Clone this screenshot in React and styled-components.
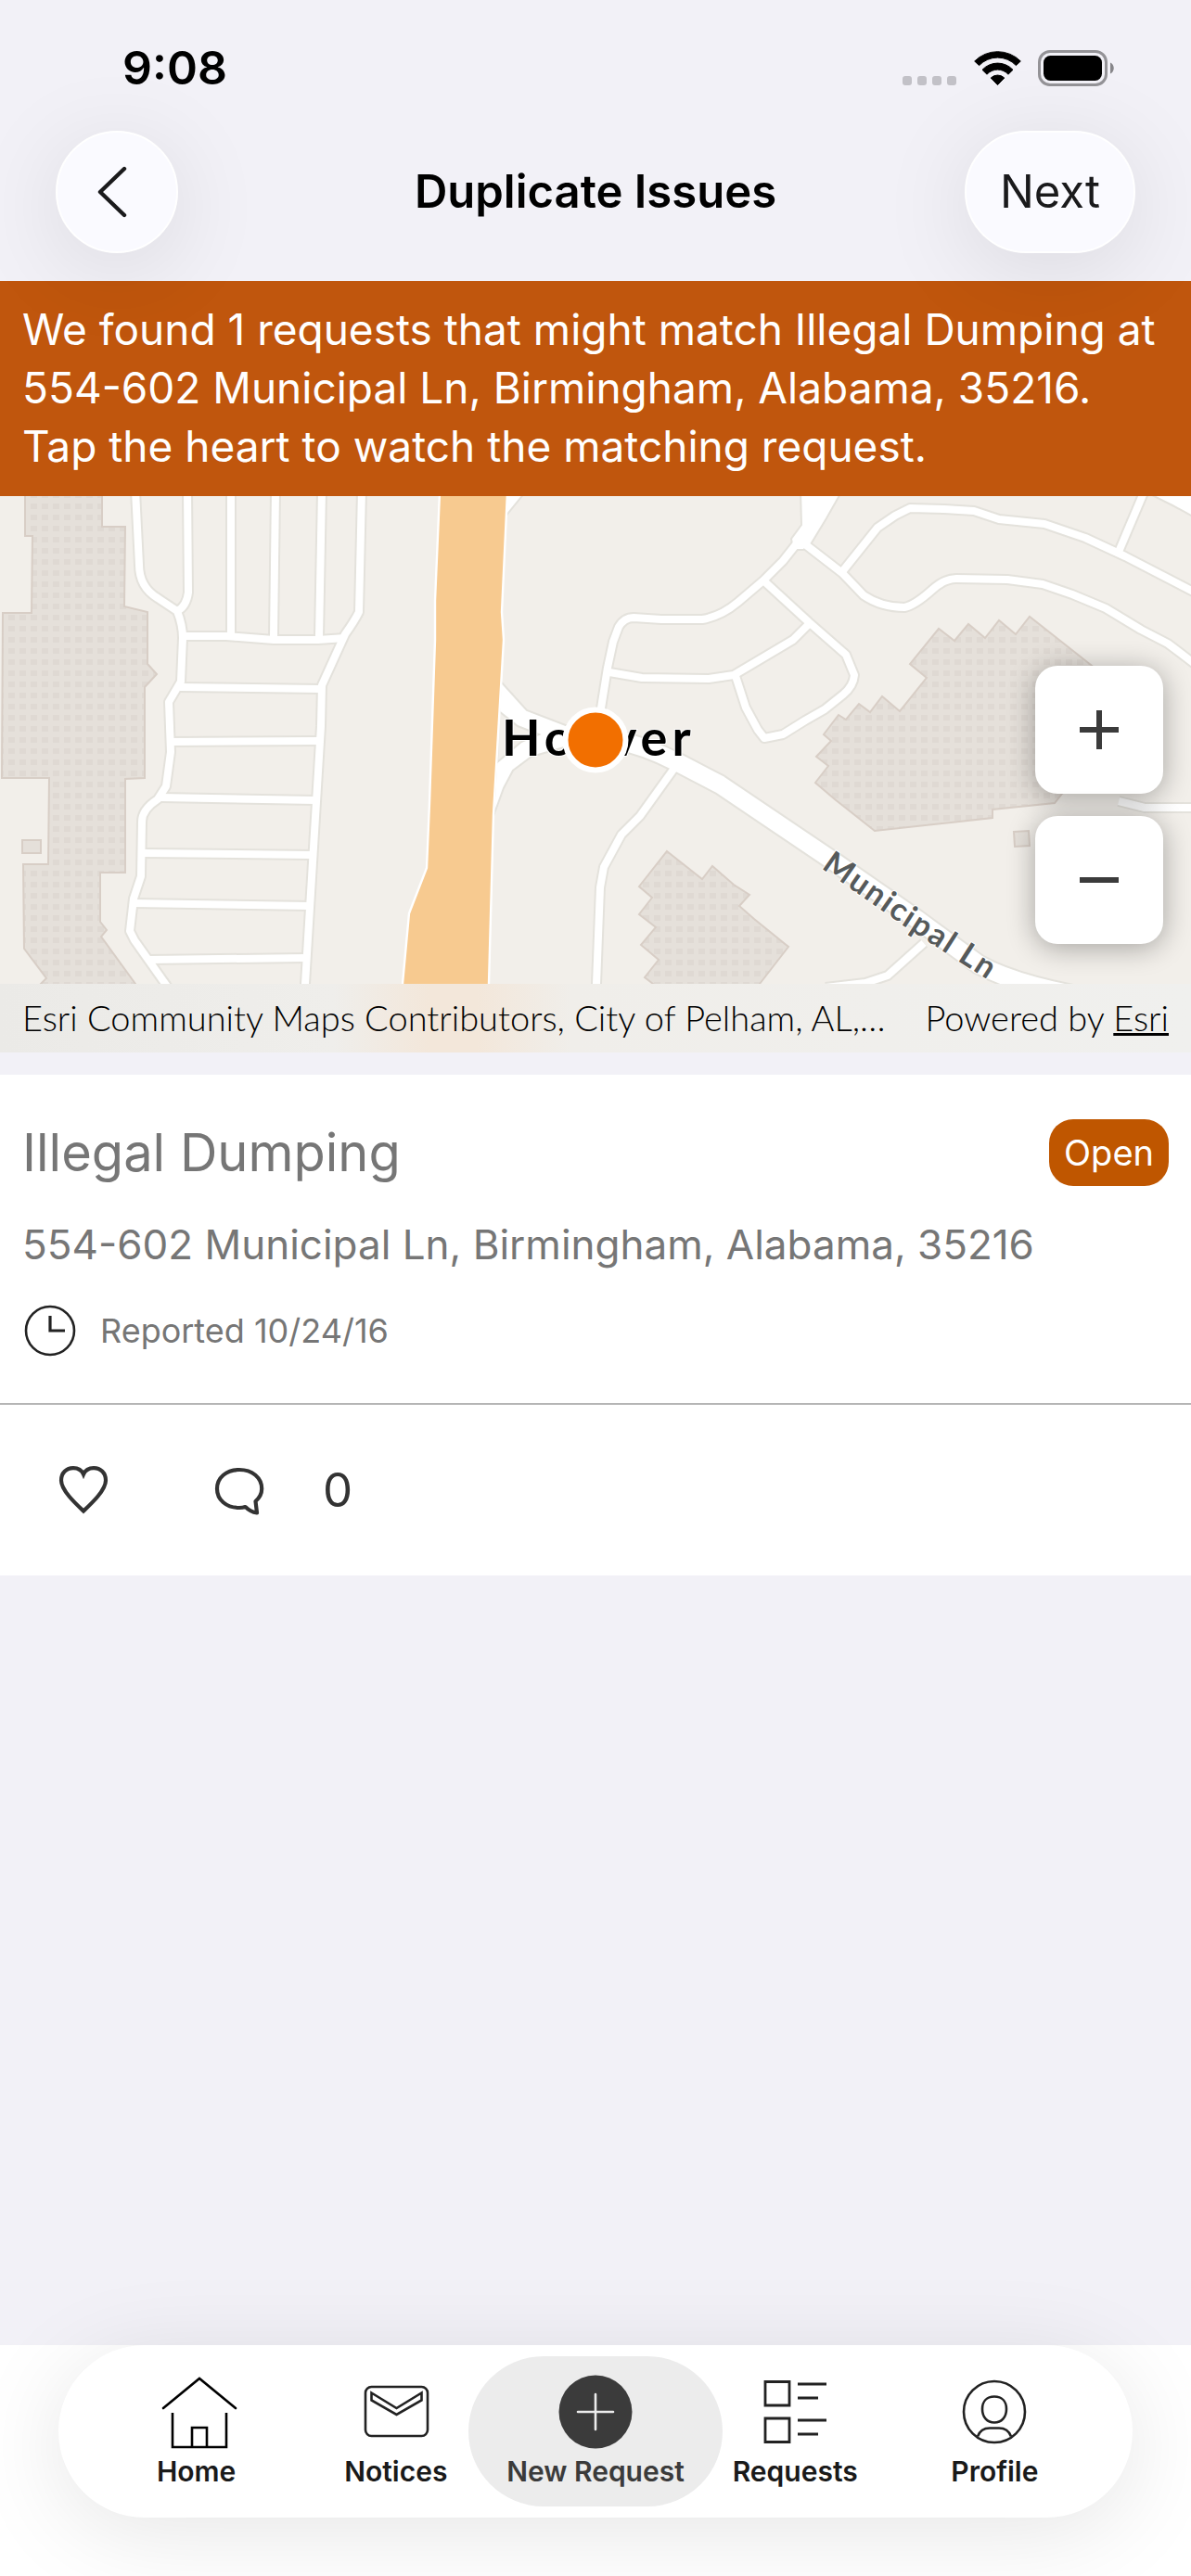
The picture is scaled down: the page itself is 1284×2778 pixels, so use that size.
import React from "react";
import styled, { createGlobalStyle } from "styled-components";

const GlobalStyle = createGlobalStyle`
  *, *::before, *::after { box-sizing: border-box; }
  body {
    margin: 0;
    background: #f2f1f7;
    font-family: Inter, "Liberation Sans", sans-serif;
    color: #1a1a1c;
  }
  h1, h2, p { margin: 0; font-weight: 400; }
  button {
    font: inherit;
    color: inherit;
    border: 0;
    padding: 0;
    background: none;
    cursor: pointer;
  }
  svg { display: block; flex: none; }
`;

const Page = styled.div`
  display: flex;
  flex-direction: column;
  min-height: 100vh;
  overflow: hidden;
`;

/* ---------- header ---------- */

const Header = styled.header`
  position: relative;
  z-index: 2;
`;

const StatusBar = styled.div`
  display: flex;
  justify-content: space-between;
  align-items: center;
  padding: 42px 82px 37px 132px;
`;

const Clock = styled.span`
  font-size: 50px;
  line-height: 62px;
  font-weight: 600;
  color: #000;
`;

const StatusIcons = styled.div`
  display: flex;
  align-items: flex-end;
  gap: 18px;
`;

const NavRow = styled.div`
  display: grid;
  grid-template-columns: 1fr auto 1fr;
  align-items: center;
  padding: 0 60px 30px;
`;

const Title = styled.h1`
  font-size: 49px;
  line-height: 60px;
  font-weight: 600;
  color: #000;
`;

const GlassButton = styled.button`
  display: flex;
  align-items: center;
  justify-content: center;
  justify-self: ${(p) => (p.$end ? "end" : "start")};
  min-width: 132px;
  height: 132px;
  padding: 0 36px;
  border: 2px solid #fff;
  border-radius: 66px;
  background: #fafaff;
  box-shadow: 0 16px 100px rgba(0, 0, 0, 0.1);
  font-size: 49px;
  line-height: 60px;
`;

/* ---------- banner ---------- */

const Banner = styled.p`
  padding: 21px 24px 22px;
  background: #c0560d;
  color: #fff;
  font-size: 46px;
  line-height: 63px;
`;

/* ---------- map ---------- */

const MapPanel = styled.section`
  position: relative;
  height: 600px;
  background: #f2efea;
  overflow: hidden;
`;

const MapSvg = styled.svg`
  width: 100%;
  height: 100%;
`;

const Road = styled.path`
  fill: none;
  stroke-linejoin: round;
  stroke: ${(p) => (p.$casing ? "#e4e2dc" : "#fff")};
  stroke-width: ${(p) => (p.$major ? 19 : 8) + (p.$casing ? 4 : 0)}px;
`;

const Building = styled.path`
  fill: ${(p) => (p.$dots ? "url(#dots)" : "#e5e0da")};
  stroke: #d8cec6;
  stroke-width: 2px;
`;

const MapLabel = styled.text`
  font-family: Lato, "Open Sans", sans-serif;
  font-weight: 700;
  font-size: ${(p) => (p.$street ? 34 : 54)}px;
  letter-spacing: ${(p) => (p.$street ? 2 : 5)}px;
  fill: ${(p) => (p.$street ? "#565a5b" : "#000")};
  stroke: #fff;
  stroke-width: 2px;
  paint-order: stroke;
`;

const ZoomControls = styled.div`
  position: absolute;
  right: 30px;
  bottom: 117px;
  display: flex;
  flex-direction: column;
  gap: 24px;
`;

const ZoomButton = styled.button`
  display: flex;
  align-items: center;
  justify-content: center;
  width: 138px;
  height: 138px;
  border-radius: 24px;
  background: #fff;
  box-shadow: 0 4px 30px rgba(0, 0, 0, 0.32);
`;

const Attribution = styled.div`
  position: absolute;
  left: 0;
  right: 0;
  bottom: 0;
  display: flex;
  justify-content: space-between;
  gap: 32px;
  height: 74px;
  padding: 0 24px;
  background: linear-gradient(90deg, #ebeae7 0%, #efeeeb 28%, #f3e7da 36%, #f3e7da 40%, #f0eeea 48%, #f0f0ee 100%);
  font-family: Lato, "Open Sans", sans-serif;
  font-weight: 300;
  font-size: 38px;
  line-height: 72px;
  color: #000;
`;

const Contributors = styled.span`
  min-width: 0;
  white-space: nowrap;
  overflow: hidden;
  text-overflow: ellipsis;
`;

const Powered = styled.span`
  flex: none;
  a { color: inherit; }
`;

/* ---------- request card ---------- */

const Card = styled.article`
  margin-top: 24px;
  background: #fff;
`;

const CardBody = styled.div`
  display: flex;
  flex-direction: column;
  gap: 35px;
  padding: 48px 24px;
  border-bottom: 2px solid #b5b5b5;
  color: #767676;
`;

const CardTop = styled.div`
  display: flex;
  justify-content: space-between;
  align-items: center;
`;

const CardTitle = styled.h2`
  font-size: 56px;
  line-height: 72px;
`;

const StatusPill = styled.span`
  padding: 0 16px;
  border-radius: 26px;
  background: #bf5600;
  color: #fff;
  font-size: 38px;
  line-height: 72px;
`;

const Address = styled.p`
  font-size: 44px;
  line-height: 56px;
`;

const Reported = styled.p`
  display: flex;
  align-items: center;
  gap: 24px;
  font-size: 36px;
  line-height: 60px;
`;

const Actions = styled.div`
  display: flex;
  align-items: center;
  gap: 112px;
  height: 184px;
  padding: 0 62px;
`;

const ActionButton = styled.button`
  display: flex;
  align-items: center;
  gap: 62px;
  font-size: 51px;
  line-height: 62px;
  color: #333;
`;

/* ---------- tab bar ---------- */

const TabArea = styled.footer`
  position: relative;
  margin-top: auto;
  padding: 0 63px 63px;
  background: #fff;
`;

const TabBar = styled.nav`
  display: grid;
  grid-template-columns: repeat(5, 1fr);
  padding: 12px 41px;
  border-radius: 93px;
  background: #fff;
  box-shadow: 0 16px 100px rgba(0, 0, 0, 0.1);
`;

const Tab = styled.button`
  display: flex;
  flex-direction: column;
  align-items: center;
  height: 162px;
  margin: ${(p) => (p.$active ? "0 -29px" : "0")};
  padding-top: 20px;
  border-radius: 81px;
  background: ${(p) => (p.$active ? "#ececec" : "transparent")};
  color: ${(p) => (p.$active ? "#3b3b3b" : "#1a1a1a")};
  font-size: 30px;
  line-height: 48px;
  font-weight: 600;
  white-space: nowrap;
`;

/* ---------- icons ---------- */

const SignalDots = () => (
  <svg width="59" height="11" viewBox="0 0 59 11" fill="#c2c1c7">
    {[0, 16, 32, 48].map((x) => (
      <rect key={x} x={x} y="0" width="10" height="10" rx="3" />
    ))}
  </svg>
);

const Wifi = () => (
  <svg width="51" height="38" viewBox="0 0 51 38" fill="#000" stroke="#000" strokeWidth="1" strokeLinejoin="round">
    <path d="M.7 11A35 35 0 0 1 50.3 11L45.4 15.6A27.5 27.5 0 0 0 5.6 15.6Z" />
    <path d="M9 20.3A22.5 22.5 0 0 1 42 20.3L37 25.2A15.5 15.5 0 0 0 14 25.2Z" />
    <path d="M18.2 29A10.5 10.5 0 0 1 32.8 29L25.5 36.6Z" />
  </svg>
);

const Battery = () => (
  <svg width="83" height="39" viewBox="0 0 83 39">
    <rect x="1.5" y="1.5" width="72" height="36" rx="11.5" fill="none" stroke="#949397" strokeWidth="3" />
    <rect x="6" y="6" width="63" height="27" rx="7.5" fill="#000" />
    <path d="M78 13.5C83 15.5 83 23.5 78 25.5Z" fill="#87868a" />
  </svg>
);

const BackIcon = () => (
  <svg width="42" height="60" viewBox="0 0 42 60" fill="none" stroke="#1a1a1c" strokeWidth="4.4" strokeLinecap="round" strokeLinejoin="round">
    <path d="M29 5L3 30L29 55" />
  </svg>
);

const ClockIcon = () => (
  <svg width="60" height="60" viewBox="0 0 60 60" fill="none" stroke="#222" strokeWidth="2.6">
    <circle cx="30" cy="30" r="26" />
    <path d="M30 14V30H46" strokeWidth="3.2" />
  </svg>
);

const HeartIcon = () => (
  <svg width="56" height="56" viewBox="0 0 56 56" fill="none" stroke="#333" strokeWidth="4.2">
    <path d="M28 50.5C19 42 4 28 4 17.5C4 9.5 9.5 4.2 17 4.2C22 4.2 26 6.5 28 11C30 6.5 34 4.2 39 4.2C46.5 4.2 52 9.5 52 17.5C52 28 37 42 28 50.5Z" />
  </svg>
);

const CommentIcon = () => (
  <svg width="56" height="56" viewBox="0 0 56 56" fill="none" stroke="#333" strokeWidth="4.2" strokeLinejoin="round">
    <path d="M34.5 46C32.5 46.7 30 47 28 47C14 47 4 38.5 4 26.5C4 14.5 14 6 28 6C42 6 52.2 14.5 52.2 26.500C52.2 31.5 50 36 45.5 40L47 52.5C44 52 38 49.5 34.5 46Z" />
  </svg>
);

const HomeIcon = () => (
  <svg width="80" height="80" viewBox="0 0 80 80" fill="none" stroke="#000" strokeWidth="2.6" overflow="visible" strokeLinecap="round">
    <path d="M4 36L43 4L82 36" />
    <path d="M14 41V78H72V41M35 78V57H51V78" strokeLinecap="butt" />
  </svg>
);

const NoticesIcon = () => (
  <svg width="80" height="80" viewBox="0 0 80 80" fill="none" stroke="#222" strokeWidth="2.6">
    <rect x="7" y="13" width="67" height="53" rx="6.5" />
    <path d="M13.5 19.5L40.5 36L67.5 19.5V27.5L40.5 43L13.5 27.5Z" />
  </svg>
);

const AddIcon = () => (
  <svg width="80" height="80" viewBox="0 0 80 80">
    <circle cx="40" cy="40" r="39.5" fill="#3b3b3b" />
    <path d="M40 21V59M21 40H59" stroke="#ececec" strokeWidth="2.6" strokeLinecap="round" />
  </svg>
);

const RequestsIcon = () => (
  <svg width="80" height="80" viewBox="0 0 80 80" fill="none" stroke="#222" strokeWidth="2.8">
    <path d="M8 7.5H34V33H8ZM8 47H34V72.5H8Z" />
    <path d="M43 10H74M43 25H65M43 49H74M43 64H65" />
  </svg>
);

const ProfileIcon = () => (
  <svg width="80" height="80" viewBox="0 0 80 80" fill="none" stroke="#222" strokeWidth="2.6">
    <circle cx="40" cy="40" r="33" />
    <path d="M40 23.5C48 23.5 53 28.5 53 37C53 46 47.5 51.5 40 51.5C32.5 51.5 27 46 27 37C27 28.5 32 23.5 40 23.5Z" />
    <path d="M22 66.5C24 61 29 57.5 35 57.5H45C51 57.5 56 61 58 66.5" />
  </svg>
);

const PlusMinus = ({ plus }) => (
  <svg width="42" height="42" viewBox="0 0 42 42" stroke="#3b3b3b" strokeWidth="6">
    <path d={plus ? "M0 21H42M21 0V42" : "M0 21H42"} />
  </svg>
);

/* ---------- map data ---------- */

const MINOR_ROADS = [
  "M146 -6L150 74Q150 98 170 110L191 124Q197 139 197 153L195 200L182 222L184 276L179 313L170 327Q153 338 153 351L152 410L144 434L140 469L145 479L186 537L220 600",
  "M202 -6L203 104Q201 119 191 124",
  "M249 -6V149",
  "M297 -6L295 152",
  "M347 -6L344 152",
  "M390 -6L387 125Q382 135 372 149L347 204L346 248L329 526L327 600",
  "M198 151L244 151L295 155L343 155L372 153",
  "M194 206L347 208",
  "M184 265L345 264",
  "M173 325L341 328",
  "M155 385L337 387",
  "M144 439L335 442",
  "M160 500L330 498",
  "M647 235L655 185L661 157L667 141Q673 131 683 131L713 133L757 133Q777 130 796 114L823 91L844 70L863 46",
  "M868 52L908 83L931 107Q950 120 975 120Q986 118 1005 101Q1018 89 1031 89L1086 90L1124 95L1156 106L1192 121L1230 144L1259 159L1300 190",
  "M906 84L946 34L965 21L981 13L1018 14L1050 16L1077 25L1126 30L1170 45L1213 65L1300 110",
  "M1234 -6L1206 60",
  "M823 91L872 136L912 171L921 193Q920 205 909 214L889 230L868 242L844 257L824 261L817 252L804 228L793 194",
  "M872 138L855 155L791 193L764 197L692 196L657 190",
  "M728 292L690 345L670 365L651 400L647 422L643 526V600",
  "M996 482L957 517L933 525L890 530",
  "M1206 329L1234 336H1300",
];

const MAIN_ROAD = "M590 256L660 262Q695 269 730 287L776 311L896 392L988 456L1055 505Q1100 530 1200 545";

const BUILDINGS = [
  "M27 -4V43H35L34 126H3L2 304H53L52 397H25L26 488L50 520L30 540V610H200L146 526L109 475L115 468L108 459V406H135V305L156 304V206L169 192L159 181V125L134 119L135 33H110V-4Z",
  "M24 371H44V385H24Z",
  "M879 309L893 291L880 281L896 264L888 257L904 236L912 241L926 224L938 233L951 216L970 232L999 196L981 181L1012 143L1029 156L1044 138L1062 153L1077 134L1095 149L1110 130L1176 182L1230 228L1145 321L1137 331L1070 338V347L943 361L900 327Z",
  "M1093 362L1109 361L1110 377L1094 378Z",
  "M719 383L757 413L768 399L791 419L808 430L797 442L813 456L850 486L819 526L780 575L704 526L695 519L710 500L691 484L707 465L689 451L703 433L689 421Z",
];

const StreetMap = () => (
  <MapSvg viewBox="0 0 1284 600" preserveAspectRatio="xMidYMid slice" role="img" aria-label="Map">
    <defs>
      <pattern id="dots" width="12" height="12" patternUnits="userSpaceOnUse">
        <rect width="12" height="12" fill="#e5e0da" />
        <rect x="0" y="8" width="4" height="4" fill="#dfd9d3" />
        <rect x="9" y="8" width="3" height="4" fill="#dfd9d3" />
        <rect x="0" y="0" width="4" height="2" fill="#dfd9d3" />
        <rect x="9" y="0" width="3" height="2" fill="#dfd9d3" />
      </pattern>
      <path id="street" d="M885 401L975 464L1090 538" />
    </defs>
    {BUILDINGS.map((d) => (
      <Building key={d} d={d} $dots={d.length > 50} />
    ))}
    {MINOR_ROADS.map((d) => (
      <Road key={d} d={d} $casing />
    ))}
    <Road d={MAIN_ROAD} $casing $major />
    <g fill="#fff" stroke="#e4e2dc" strokeWidth="2">
      <path d="M863 -6L864 31L853 46L855 58H866L874 52L891 24L908 -6Z" />
      <path d="M1236 -4L1264 10L1290 24V-4Z" />
      <path d="M540 200L568 231L615 249V269L573 281L553 296L543 315L532 345Z" />
      <path d="M543 -4H566L545 22Z" />
    </g>
    {MINOR_ROADS.map((d) => (
      <Road key={d} d={d} />
    ))}
    <Road d={MAIN_ROAD} $major />
    <path d="M538 232L558 248L581 257L562 265L536 287Z" fill="#f2efea" stroke="#e4e2dc" strokeWidth="2" />
    <path
      d="M474 -4L469 113V155L463 331L460 401L441 450L434 526L430 610H526L527 526L532 343L543 155L541 125L547 -4Z"
      fill="#f7ca90"
      stroke="#fff"
      strokeWidth="2.4"
    />
    <MapLabel x="541" y="280">Hoover</MapLabel>
    <MapLabel $street>
      <textPath href="#street">Municipal Ln</textPath>
    </MapLabel>
    <circle cx="642" cy="263" r="32.5" fill="#f26f00" stroke="#fff" strokeWidth="6" />
  </MapSvg>
);

const TABS = [
  { label: "Home", Icon: HomeIcon },
  { label: "Notices", Icon: NoticesIcon },
  { label: "New Request", Icon: AddIcon, active: true },
  { label: "Requests", Icon: RequestsIcon },
  { label: "Profile", Icon: ProfileIcon },
];

export default function App() {
  return (
    <Page>
      <GlobalStyle />
      <Header>
        <StatusBar>
          <Clock>9:08</Clock>
          <StatusIcons>
            <SignalDots />
            <Wifi />
            <Battery />
          </StatusIcons>
        </StatusBar>
        <NavRow>
          <GlassButton aria-label="Back">
            <BackIcon />
          </GlassButton>
          <Title>Duplicate Issues</Title>
          <GlassButton $end>Next</GlassButton>
        </NavRow>
      </Header>
      <main>
        <Banner>
          We found 1 requests that might match Illegal Dumping at 554-602 Municipal Ln, Birmingham, Alabama, 35216. Tap
          the heart to watch the matching request.
        </Banner>
        <MapPanel>
          <StreetMap />
          <ZoomControls>
            <ZoomButton aria-label="Zoom in">
              <PlusMinus plus />
            </ZoomButton>
            <ZoomButton aria-label="Zoom out">
              <PlusMinus />
            </ZoomButton>
          </ZoomControls>
          <Attribution>
            <Contributors>Esri Community Maps Contributors, City of Pelham, AL,…</Contributors>
            <Powered>
              Powered by <a href="#esri">Esri</a>
            </Powered>
          </Attribution>
        </MapPanel>
        <Card>
          <CardBody>
            <CardTop>
              <CardTitle>Illegal Dumping</CardTitle>
              <StatusPill>Open</StatusPill>
            </CardTop>
            <Address>554-602 Municipal Ln, Birmingham, Alabama, 35216</Address>
            <Reported>
              <ClockIcon />
              Reported 10/24/16
            </Reported>
          </CardBody>
          <Actions>
            <ActionButton aria-label="Watch request">
              <HeartIcon />
            </ActionButton>
            <ActionButton aria-label="Comments">
              <CommentIcon />0
            </ActionButton>
          </Actions>
        </Card>
      </main>
      <TabArea>
        <TabBar aria-label="Main">
          {TABS.map(({ label, Icon, active }) => (
            <Tab key={label} $active={active} aria-current={active ? "page" : undefined}>
              <Icon />
              {label}
            </Tab>
          ))}
        </TabBar>
      </TabArea>
    </Page>
  );
}
